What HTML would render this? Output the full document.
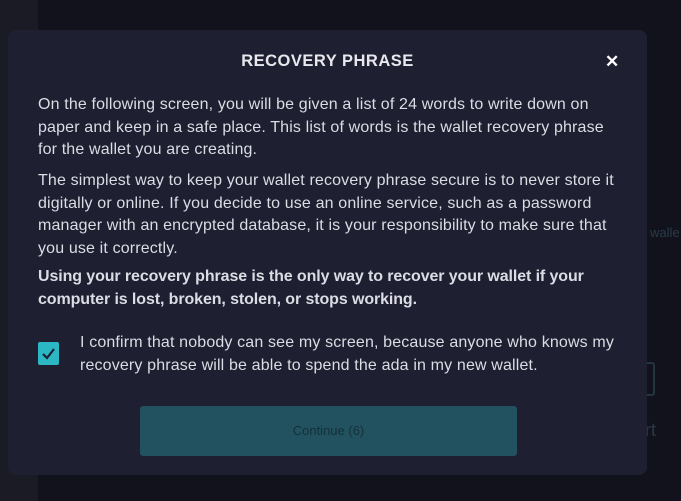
<!DOCTYPE html>
<html><head><style>
body{margin:0;width:681px;height:501px;background:#11121c;font-family:"Liberation Sans",sans-serif;overflow:hidden;position:relative}
.strip{position:absolute;left:0;top:0;width:38px;height:501px;background:#1a1b25}
.bgx{position:absolute;color:#2a3b48;font-size:13px}
.modal{position:absolute;left:8px;top:30px;width:639px;height:445px;background:#1e1f30;border-radius:8px}
h1{position:absolute;left:240px;width:175px;top:52px;margin:0;text-align:center;color:#e8e8ee;font-size:16.5px;font-weight:bold;letter-spacing:0.5px;white-space:nowrap}
.x{position:absolute;left:605px;top:52px;color:#fff;font-size:17px;font-weight:bold}
.t{position:absolute;left:38px;color:#dcdce4;font-size:16px;line-height:22.5px;white-space:nowrap;letter-spacing:0.15px}
.cb{position:absolute;left:38px;top:342px;width:21px;height:23px;background:#2bb8c4;border-radius:2px}
.btn{position:absolute;left:140px;top:406px;width:377px;height:50px;background:#22525f;border-radius:3px;color:#13303a;font-size:13px;text-align:center;line-height:50px}
</style></head><body>
<div class="strip"></div>
<div class="bgx" style="left:650px;top:225px">walle</div>
<div class="bgx" style="left:645px;top:420px;font-size:18px">rt</div>
<div style="position:absolute;left:640px;top:362px;width:13px;height:30px;border:2px solid #253540;border-left:none;border-radius:3px"></div>
<div class="modal"></div>
<h1>RECOVERY PHRASE</h1>
<div class="x">✕</div>
<div class="t" style="top:94px">On the following screen, you will be given a list of 24 words to write down on<br>paper and keep in a safe place. This list of words is the wallet recovery phrase<br>for the wallet you are creating.</div>
<div class="t" style="top:170px">The simplest way to keep your wallet recovery phrase secure is to never store it<br>digitally or online. If you decide to use an online service, such as a password<br>manager with an encrypted database, it is your responsibility to make sure that<br>you use it correctly.</div>
<div class="t" style="top:266px;font-weight:bold;letter-spacing:-0.1px">Using your recovery phrase is the only way to recover your wallet if your<br>computer is lost, broken, stolen, or stops working.</div>
<div class="cb"><svg width="21" height="23" viewBox="0 0 21 23"><path d="M5 12 L9 16 L16 7" stroke="#1e1f30" stroke-width="2.2" fill="none"/></svg></div>
<div class="t" style="top:332px;left:80px">I confirm that nobody can see my screen, because anyone who knows my<br>recovery phrase will be able to spend the ada in my new wallet.</div>
<div class="btn">Continue (6)</div>
</body></html>
